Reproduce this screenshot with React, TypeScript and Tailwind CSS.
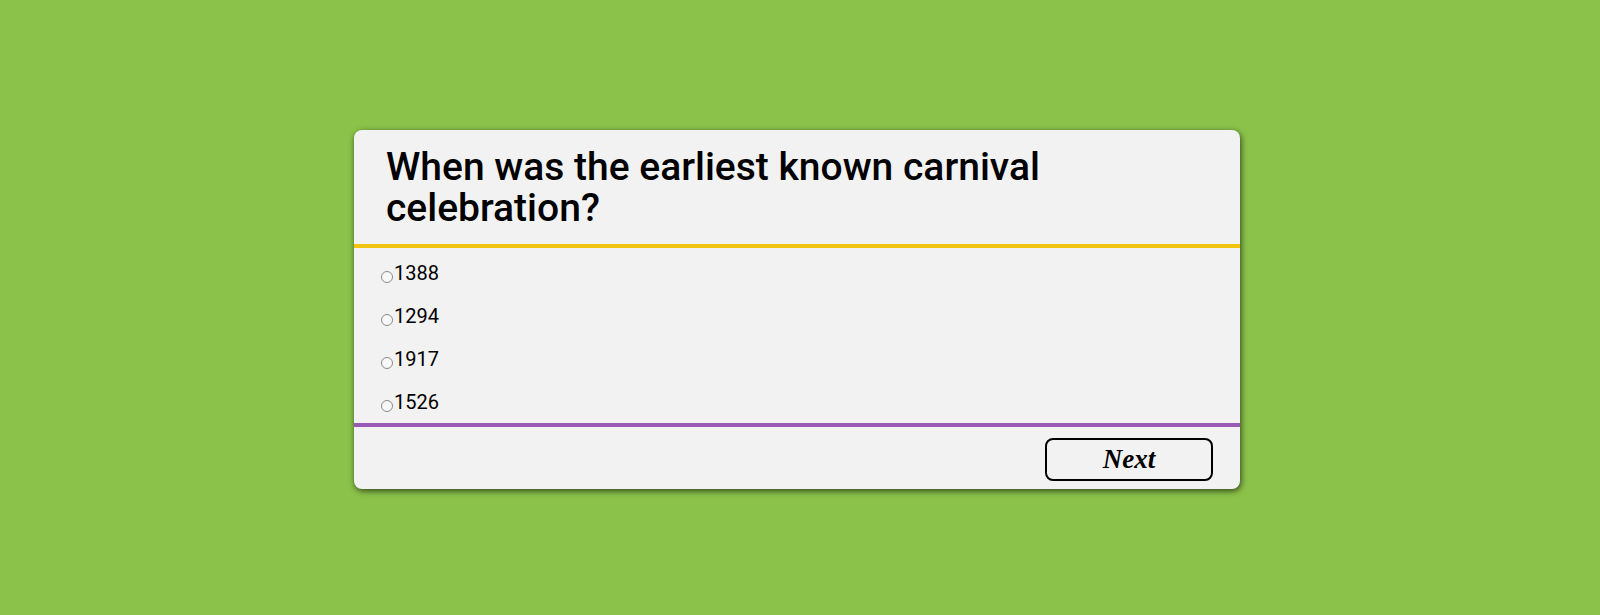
import React from "react";

const options = ["1388", "1294", "1917", "1526"];

export default function App() {
  return (
    <div className="w-full h-[615px] bg-[#8bc34a] flex justify-center pt-[130px] pr-[6px]" style={{ fontFamily: "Roboto, 'Noto Sans', sans-serif" }}>
      <div className="w-[886px] h-[359px] self-start bg-[#f2f2f2] rounded-[8px] shadow-[1px_2px_6px_rgba(0,0,0,0.65)] flex flex-col overflow-hidden">
        <div className="px-[32px] pt-[17px] pb-[15px] border-b-[4px] border-[#f1c40f]">
          <h1 className="max-w-[720px] text-[39px] leading-[41px] font-medium text-black">
            When was the earliest known carnival celebration?
          </h1>
        </div>
        <ul className="pt-[4px] pl-[27px] h-[175px]">
          {options.map((o) => (
            <li key={o} className="h-[43px] flex items-center text-[20px] text-black">
              <span className="w-[12px] h-[12px] rounded-full border-[1.5px] border-[#8a8a8a] bg-[#f8f8f8] mt-[6px] mr-[1px]" />
              <span className="leading-[43px]">{o}</span>
            </li>
          ))}
        </ul>
        <div className="border-t-[4px] border-[#9b59b6] flex justify-end pt-[11px] pr-[27px]">
          <button
            className="w-[168px] h-[43px] border-2 border-black rounded-[8px] text-[27px] font-bold italic text-black leading-none"
            style={{ fontFamily: "'Liberation Serif', 'DejaVu Serif', serif" }}
          >
            Next
          </button>
        </div>
      </div>
    </div>
  );
}
